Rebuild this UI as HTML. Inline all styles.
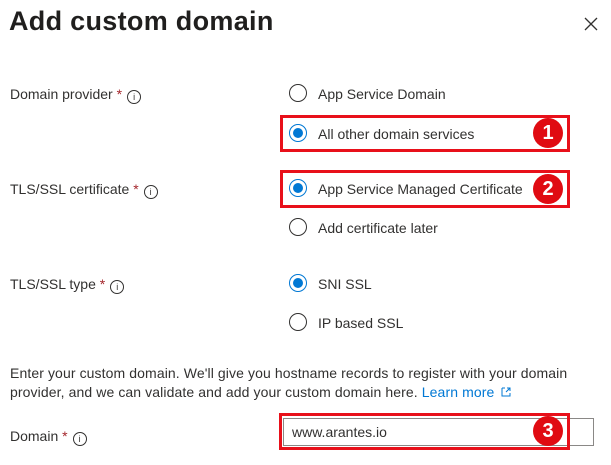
<!DOCTYPE html>
<html><head><style>
body{margin:0;width:611px;height:465px;background:#fff;font-family:"Liberation Sans",sans-serif;color:#323130;position:relative;overflow:hidden}
.a{position:absolute;white-space:nowrap}
.t{font-size:27px;font-weight:bold;color:#201f1e;left:9px;top:6px;letter-spacing:0.3px}
.l{font-size:14px;left:10px}
.s{color:#a4262c}
.i{display:inline-block;width:12px;height:12px;border:1px solid #323130;border-radius:50%;font-size:9px;line-height:12px;text-align:center;vertical-align:-1px;margin-left:5px}
.r{position:absolute;width:18px;height:18px;border:1px solid #323130;border-radius:50%;box-sizing:border-box}
.r.on{border-color:#0078d4}
.r.on::after{content:"";position:absolute;left:3px;top:3px;width:10px;height:10px;border-radius:50%;background:#0078d4}
.rt{font-size:14px}
.box{position:absolute;border:3px solid #e8101a;box-sizing:border-box}
.b{position:absolute;width:30px;height:30px;border-radius:50%;background:#e00b12;color:#fff;font-weight:bold;font-size:20px;text-align:center;line-height:30px}
</style></head><body>
<div class="a t">Add custom domain</div>
<svg class="a" style="left:584px;top:17px" width="14" height="14"><path d="M1 1L13 13M13 1L1 13" stroke="#323130" stroke-width="1.3"/></svg>

<div class="a l" style="top:86px">Domain provider <span class="s">*</span><span class="i">i</span></div>
<div class="r" style="left:289px;top:84px"></div><div class="a rt" style="left:318px;top:86px">App Service Domain</div>
<div class="box" style="left:280px;top:115px;width:290px;height:37px"></div>
<div class="r on" style="left:289px;top:124px"></div><div class="a rt" style="left:318px;top:126px">All other domain services</div>
<div class="b" style="left:533px;top:118px">1</div>

<div class="a l" style="top:181px">TLS/SSL certificate <span class="s">*</span><span class="i">i</span></div>
<div class="box" style="left:280px;top:170px;width:290px;height:38px"></div>
<div class="r on" style="left:289px;top:179px"></div><div class="a rt" style="left:318px;top:181px">App Service Managed Certificate</div>
<div class="b" style="left:533px;top:174px">2</div>
<div class="r" style="left:289px;top:218px"></div><div class="a rt" style="left:318px;top:220px">Add certificate later</div>

<div class="a l" style="top:276px">TLS/SSL type <span class="s">*</span><span class="i">i</span></div>
<div class="r on" style="left:289px;top:274px"></div><div class="a rt" style="left:318px;top:276px">SNI SSL</div>
<div class="r" style="left:289px;top:313px"></div><div class="a rt" style="left:318px;top:315px">IP based SSL</div>

<div class="a l" style="top:364px;line-height:19px;letter-spacing:0.1px">Enter your custom domain. We'll give you hostname records to register with your domain<br>provider, and we can validate and add your custom domain here. <span style="color:#0078d4">Learn more</span> <svg width="10" height="10" style="vertical-align:0;margin-left:3px"><path d="M1 1h3M1 1v8h8V6M6 1h3v3M9 1L5 5" stroke="#0078d4" fill="none"/></svg></div>

<div class="a l" style="top:428px">Domain <span class="s">*</span><span class="i">i</span></div>
<div style="position:absolute;left:283px;top:418px;width:311px;height:28px;border:1px solid #8a8886;box-sizing:border-box"></div>
<div class="a rt" style="left:292px;top:424px">www.arantes.io</div>
<div class="box" style="left:279px;top:413px;width:291px;height:37px"></div>
<div class="b" style="left:533px;top:416px">3</div>
</body></html>
